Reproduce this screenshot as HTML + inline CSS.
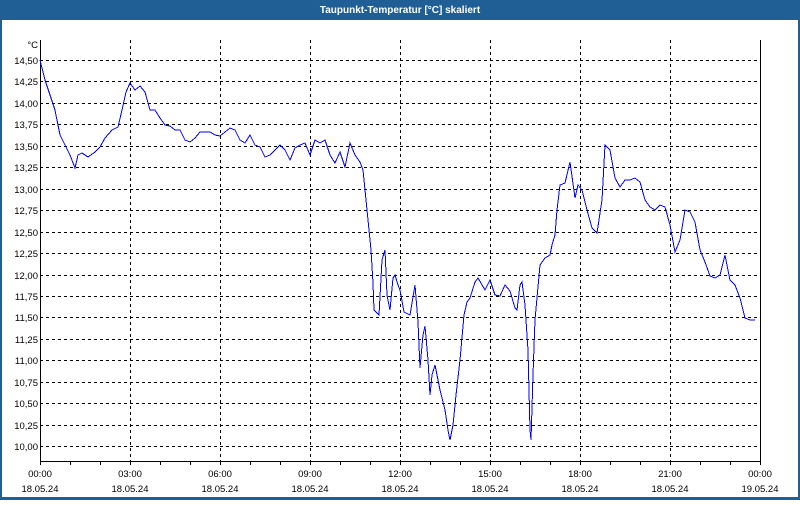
<!DOCTYPE html>
<html><head><style>
body{margin:0;width:800px;height:500px;overflow:hidden;background:#fff;font-family:"Liberation Sans",sans-serif}
</style></head><body>
<svg width="800" height="500" xmlns="http://www.w3.org/2000/svg" font-family="Liberation Sans, sans-serif" font-size="9.5">
<rect x="0" y="0" width="800" height="500" fill="#1f5f96"/>
<rect x="2" y="20" width="796" height="477" fill="#fff"/>
<text x="400" y="13" fill="#fff" font-size="10" font-weight="bold" text-anchor="middle">Taupunkt-Temperatur [°C] skaliert</text>
<g stroke="#000" stroke-width="1" stroke-dasharray="3,3" shape-rendering="crispEdges">
<line x1="40" x2="760" y1="60.5" y2="60.5"/><line x1="40" x2="760" y1="81.5" y2="81.5"/><line x1="40" x2="760" y1="103.5" y2="103.5"/><line x1="40" x2="760" y1="124.5" y2="124.5"/><line x1="40" x2="760" y1="146.5" y2="146.5"/><line x1="40" x2="760" y1="167.5" y2="167.5"/><line x1="40" x2="760" y1="189.5" y2="189.5"/><line x1="40" x2="760" y1="210.5" y2="210.5"/><line x1="40" x2="760" y1="232.5" y2="232.5"/><line x1="40" x2="760" y1="253.5" y2="253.5"/><line x1="40" x2="760" y1="275.5" y2="275.5"/><line x1="40" x2="760" y1="296.5" y2="296.5"/><line x1="40" x2="760" y1="317.5" y2="317.5"/><line x1="40" x2="760" y1="339.5" y2="339.5"/><line x1="40" x2="760" y1="360.5" y2="360.5"/><line x1="40" x2="760" y1="382.5" y2="382.5"/><line x1="40" x2="760" y1="403.5" y2="403.5"/><line x1="40" x2="760" y1="425.5" y2="425.5"/><line x1="40" x2="760" y1="446.5" y2="446.5"/>
<line x1="130.5" x2="130.5" y1="40" y2="461"/><line x1="220.5" x2="220.5" y1="40" y2="461"/><line x1="310.5" x2="310.5" y1="40" y2="461"/><line x1="400.5" x2="400.5" y1="40" y2="461"/><line x1="490.5" x2="490.5" y1="40" y2="461"/><line x1="580.5" x2="580.5" y1="40" y2="461"/><line x1="670.5" x2="670.5" y1="40" y2="461"/>
</g>
<g stroke="#000" stroke-width="1" shape-rendering="crispEdges" fill="none">
<polyline points="40.5,40 40.5,461.5 760.5,461.5 760.5,40"/>
<path d="M70.5 461v4M100.5 461v4M130.5 461v4M160.5 461v4M190.5 461v4M220.5 461v4M250.5 461v4M280.5 461v4M310.5 461v4M340.5 461v4M370.5 461v4M400.5 461v4M430.5 461v4M460.5 461v4M490.5 461v4M520.5 461v4M550.5 461v4M580.5 461v4M610.5 461v4M640.5 461v4M670.5 461v4M700.5 461v4M730.5 461v4M40.5 461v4M760.5 461v4"/>
</g>
<g text-anchor="end" fill="#000">
<text x="38" y="48">°C</text>
<text x="38" y="64">14,50</text><text x="38" y="85">14,25</text><text x="38" y="107">14,00</text><text x="38" y="128">13,75</text><text x="38" y="150">13,50</text><text x="38" y="171">13,25</text><text x="38" y="193">13,00</text><text x="38" y="214">12,75</text><text x="38" y="236">12,50</text><text x="38" y="257">12,25</text><text x="38" y="279">12,00</text><text x="38" y="300">11,75</text><text x="38" y="321">11,50</text><text x="38" y="343">11,25</text><text x="38" y="364">11,00</text><text x="38" y="386">10,75</text><text x="38" y="407">10,50</text><text x="38" y="429">10,25</text><text x="38" y="450">10,00</text>
</g>
<g text-anchor="middle" fill="#000">
<text x="40" y="477">00:00</text><text x="130" y="477">03:00</text><text x="220" y="477">06:00</text><text x="310" y="477">09:00</text><text x="400" y="477">12:00</text><text x="490" y="477">15:00</text><text x="580" y="477">18:00</text><text x="670" y="477">21:00</text><text x="760" y="477">00:00</text>
<text x="40" y="492">18.05.24</text><text x="130" y="492">18.05.24</text><text x="220" y="492">18.05.24</text><text x="310" y="492">18.05.24</text><text x="400" y="492">18.05.24</text><text x="490" y="492">18.05.24</text><text x="580" y="492">18.05.24</text><text x="670" y="492">18.05.24</text><text x="760" y="492">19.05.24</text>
</g>
<polyline fill="none" stroke="#0000ff" stroke-width="1" shape-rendering="crispEdges" points="40,60 45,80 50,95 55,110 60,135 65,145 70,155 75,168 78,155 82,153 88,157 95,152 100,147 105,138 112,130 118,127 122,110 126,92 130,83 135,90 140,86 145,92 150,110 155,110 160,118 165,125 170,126 175,130 180,130 185,140 190,142 195,138 200,132 205,132 210,132 215,135 220,136 225,132 230,128 235,130 240,140 245,143 250,135 255,145 260,147 265,157 270,155 275,150 280,145 285,150 290,160 295,148 300,145 305,143 310,155 315,140 320,143 325,140 330,155 335,163 340,152 345,167 350,143 355,155 360,162 363,170 367,210 371,250 373,283 374,310 379,315 382,260 385,250 387,295 390,310 393,278 395,275 398,285 400,290 404,312 410,315 415,285 418,322 420,368 423,335 425,326 428,360 430,395 432,375 435,365 440,390 445,410 448,430 450,440 453,425 456,395 460,360 464,315 467,302 470,298 475,282 478,278 485,290 490,280 495,295 500,296 505,285 510,291 515,308 517,310 520,285 522,282 525,305 528,350 530,430 531,440 533,375 535,320 540,265 545,258 550,255 552,245 555,235 557,210 560,185 565,183 570,162 575,198 578,185 582,190 587,210 592,228 597,233 602,200 605,145 610,150 615,178 620,187 625,180 630,180 635,178 640,182 645,200 650,207 655,210 660,205 665,207 670,225 675,252 680,240 685,210 690,212 695,222 700,250 705,262 710,276 715,278 720,275 725,255 730,280 735,285 740,298 745,318 750,320 755,320"/>
</svg>
</body></html>
